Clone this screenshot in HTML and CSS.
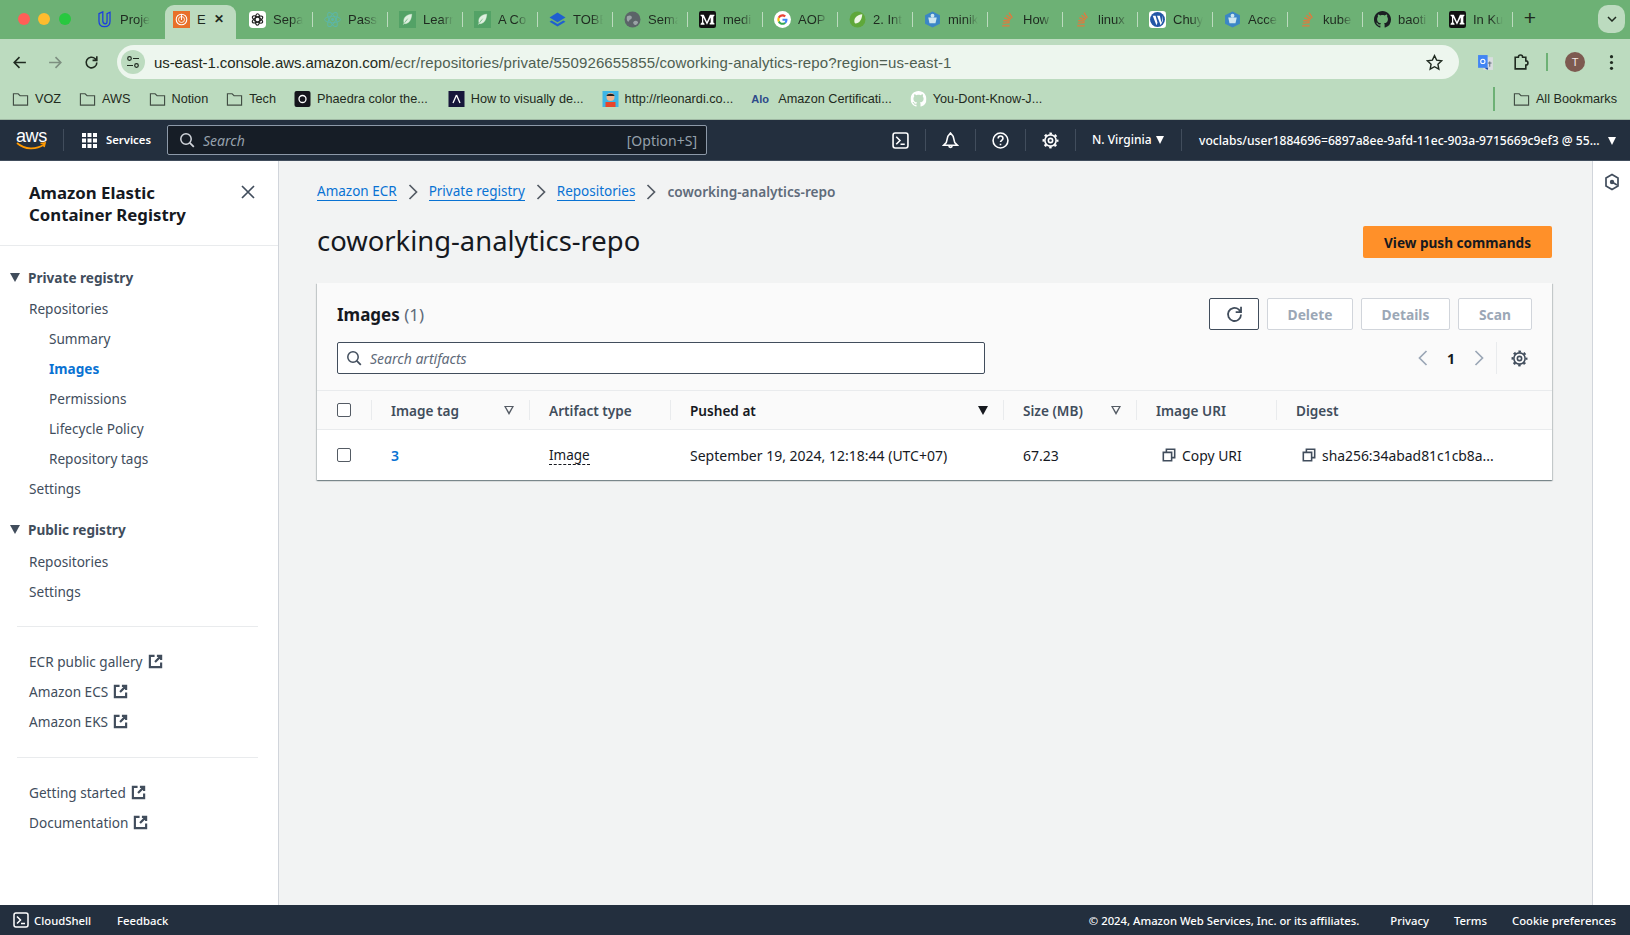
FILE: index.html
```html
<!DOCTYPE html>
<html>
<head>
	<title>coworking-analytics-repo</title>
	<link rel="stylesheet" href="styles.css">
</head>
<body>
	<svg class="defs">
		<symbol id="i-udacity" viewBox="0 0 16 20"><path d="M1.5 3 6 1v10.500c0 2 1 3.500 3 3.500s2-1.500 2-3V3l3.500-1.500V12c0 4-2.500 6.500-6.500 6.500S1.500 16 1.500 12z" fill="none" stroke="#1c3fe0" stroke-width="1.500"/></symbol>
		<symbol id="i-aws-tab" viewBox="0 0 16 16"><rect width="16" height="16" fill="#e8702a"/><circle cx="8" cy="8" r="5" fill="none" stroke="#fff" stroke-width="1"/><circle cx="8" cy="8" r="2.800" fill="none" stroke="#fff" stroke-width=".8"/><path d="M8 3v5.500" stroke="#fff" stroke-width=".9"/></symbol>
		<symbol id="i-openai" viewBox="0 0 16 16"><rect width="16" height="16" rx="3.500" fill="#fff"/><g fill="none" stroke="#222" stroke-width="1.100"><ellipse cx="8" cy="8" rx="2.200" ry="5.400"/><ellipse cx="8" cy="8" rx="2.200" ry="5.400" transform="rotate(60 8 8)"/><ellipse cx="8" cy="8" rx="2.200" ry="5.400" transform="rotate(120 8 8)"/></g></symbol>
		<symbol id="i-react" viewBox="0 0 16 16"><g fill="none" stroke="#5cb6a8" stroke-width=".9"><ellipse cx="8" cy="8" rx="7.500" ry="3"/><ellipse cx="8" cy="8" rx="7.500" ry="3" transform="rotate(60 8 8)"/><ellipse cx="8" cy="8" rx="7.500" ry="3" transform="rotate(120 8 8)"/></g><circle cx="8" cy="8" r="1.400" fill="#5cb6a8"/></symbol>
		<symbol id="i-leaf" viewBox="0 0 16 16"><rect width="16" height="16" fill="#53a266"/><path d="M12 3C7 3.500 4.500 6 4.500 9.500c0 1.200.4 2 1 2.500C10 11.500 11.500 8 12 3zM4 13c1-3 3-5 5-6.500" fill="#dff0e0" stroke="#dff0e0" stroke-width=".4"/></symbol>
		<symbol id="i-tobe" viewBox="0 0 16 16"><path d="M8 1.500 15.500 6 8 10.500.5 6z" fill="#1f5fd0"/><path d="M2.500 9 8 12.300 13.500 9l2 1.200L8 14.500.5 10.200z" fill="#1f5fd0"/></symbol>
		<symbol id="i-globe" viewBox="0 0 16 16"><circle cx="8" cy="8" r="7.500" fill="#5b6468"/><path d="M3 5c2-1 3-1 4 0s0 3-1 3-1 2-2 2-2-3-1-5zm6 5c1-1 3-1 4 0s-2 4-3 3-2-2-1-3z" fill="#9aa3a6"/></symbol>
		<symbol id="i-medium" viewBox="0 0 16 16"><rect width="16" height="16" rx="2" fill="#111"/><path d="M1.500 3.500h3l3 6.500 2.800-6.500h4.200v1l-1 .8v5.500l1 .8v1h-4.500v-1l1-.8V6L7.500 13 4 6v4.500l1.200 1.500v1H1.500v-1l1.300-1.500V5.300l-1.300-.8z" fill="#fff"/></symbol>
		<symbol id="i-google" viewBox="0 0 16 16"><circle cx="8" cy="8" r="8" fill="#fff"/><path d="M12.700 8.200c0-.4 0-.7-.1-1H8v1.900h2.600c-.1.600-.5 1.200-1 1.500l1.600 1.200c1-.9 1.500-2.200 1.500-3.600z" fill="#4285f4"/><path d="M8 13c1.300 0 2.400-.4 3.200-1.200l-1.600-1.200c-.4.300-1 .5-1.600.5-1.300 0-2.300-.8-2.700-2L3.700 10.300C4.500 11.900 6.100 13 8 13z" fill="#34a853"/><path d="M5.300 9.100c-.2-.7-.2-1.500 0-2.200L3.700 5.700c-.7 1.400-.7 3.100 0 4.600z" fill="#fbbc05"/><path d="M8 5.100c.7 0 1.300.2 1.800.7l1.400-1.400C10.400 3.500 9.200 3 8 3 6.100 3 4.500 4.100 3.700 5.700l1.600 1.200c.4-1 1.400-1.800 2.700-1.800z" fill="#ea4335"/></symbol>
		<symbol id="i-spring" viewBox="0 0 16 16"><circle cx="8" cy="8" r="7.500" fill="#5fa83a"/><path d="M12.500 3C8 3.500 5 6 5 9.500c0 1 .3 1.800.8 2.300C10 11.500 12 8 12.500 3z" fill="#eef6e6"/></symbol>
		<symbol id="i-mini" viewBox="0 0 16 16"><path d="M8 .5 15 4v8l-7 3.500L1 12V4z" fill="#3b86c6"/><path d="M4 6h8l-1.200 5.500H5.200z" fill="#cfe6ef"/><circle cx="8" cy="4.500" r="1.800" fill="#cfe6ef"/></symbol>
		<symbol id="i-flame" viewBox="0 0 16 16"><g fill="none" stroke="#e8763a" stroke-width="1.100"><path d="M3 14h7"/><path d="M3.500 11.500 10 11"/><path d="M4 9l6 .6"/><path d="M5 6.500l5.500 2"/><path d="M7 4l4.500 3.500"/><path d="M9.500 1.500l3 5"/></g></symbol>
		<symbol id="i-w" viewBox="0 0 16 16"><rect width="16" height="16" rx="3" fill="#fff"/><circle cx="8" cy="8" r="7" fill="#2257a6"/><path d="M3.500 4.500h2.700L8 11l-1 2.300zM7.500 4.500h2.700l1.500 6.500 1-3.500c.3-1.300-.3-2-.7-3 1.500 1.500 1.500 3.500.7 5.500l-1.700 3.500z" fill="#fff"/></symbol>
		<symbol id="i-github" viewBox="0 0 16 16"><path d="M8 0C3.580 0 0 3.580 0 8c0 3.540 2.290 6.530 5.470 7.590.4.070.55-.17.55-.38 0-.19-.01-.82-.01-1.490-2.010.37-2.530-.49-2.690-.94-.09-.23-.48-.94-.82-1.130-.28-.15-.68-.52-.01-.53.63-.01 1.080.58 1.230.82.720 1.210 1.870.87 2.330.66.070-.52.280-.87.510-1.070-1.780-.2-3.640-.89-3.640-3.950 0-.87.310-1.590.820-2.150-.08-.2-.36-1.020.080-2.120 0 0 .670-.21 2.200.820.640-.18 1.320-.27 2-.27.680 0 1.360.090 2 .27 1.530-1.040 2.200-.82 2.200-.82.440 1.100.160 1.920.080 2.120.510.560.820 1.270.820 2.150 0 3.070-1.870 3.750-3.650 3.950.290.250.540.730.540 1.480 0 1.070-.01 1.930-.01 2.200 0 .21.150.46.550.38A8.013 8.013 0 0016 8c0-4.420-3.580-8-8-8z" fill="currentColor"/></symbol>
		<symbol id="i-folder" viewBox="0 0 18 16"><path d="M1.500 2.500h5l2 2h8v10h-15z" fill="none" stroke="currentColor" stroke-width="1.200"/></symbol>
		<symbol id="i-external" viewBox="0 0 16 16"><path d="M7 2H2v12h12V9M9.500 2H14v4.500M14 2 7.500 8.500" fill="none" stroke="currentColor" stroke-width="2.300"/></symbol>
		<symbol id="i-gear" viewBox="0 0 16 16"><circle cx="8" cy="8" r="5.300" fill="none" stroke="currentColor" stroke-width="1.500"/><circle cx="8" cy="8" r="6.600" fill="none" stroke="currentColor" stroke-width="1.800" stroke-dasharray="2.400 2.780" stroke-dashoffset="1.200"/><circle cx="8" cy="8" r="2" fill="none" stroke="currentColor" stroke-width="1.500"/></symbol>
		<symbol id="i-shell" viewBox="0 0 16 16"><rect x="1" y="1" width="14" height="14" rx="2" fill="none" stroke="currentColor" stroke-width="1.500"/><path d="M4 4.500 7.500 8 4 11.500M8 11.500h4" fill="none" stroke="currentColor" stroke-width="1.500"/></symbol>
		<symbol id="i-search" viewBox="0 0 16 16"><circle cx="7" cy="7" r="5.200" fill="none" stroke="currentColor" stroke-width="1.500"/><path d="m10.800 10.800 4 4" stroke="currentColor" stroke-width="1.800"/></symbol>
		<symbol id="i-copy" viewBox="0 0 16 16"><path d="M1.500 5h9.500v9.500H1.500zM5 5V1.500h9.500V11H11" fill="none" stroke="currentColor" stroke-width="1.800"/></symbol>
		<symbol id="i-chev" viewBox="0 0 10 16"><path d="m1.500 1 7 7-7 7" fill="none" stroke="currentColor" stroke-width="1.700"/></symbol>
	</svg>

	<div class="tabstrip">
		<div class="lights"><span class="light red"></span><span class="light yellow"></span><span class="light green"></span></div>
		<div class="tab firsttab"><svg class="favicon"><use href="#i-udacity"/></svg><span class="tabtitle">Proje</span></div>
		<div class="tab active"><svg class="favicon"><use href="#i-aws-tab"/></svg><span class="tabtitle short">E</span><span class="tabclose">✕</span></div>
		<div class="tab"><svg class="favicon"><use href="#i-openai"/></svg><span class="tabtitle">Sepa</span></div>
		<div class="tab"><svg class="favicon"><use href="#i-react"/></svg><span class="tabtitle">Passi</span></div>
		<div class="tab"><svg class="favicon"><use href="#i-leaf"/></svg><span class="tabtitle">Learr</span></div>
		<div class="tab"><svg class="favicon"><use href="#i-leaf"/></svg><span class="tabtitle">A Co</span></div>
		<div class="tab"><svg class="favicon"><use href="#i-tobe"/></svg><span class="tabtitle">TOBE</span></div>
		<div class="tab"><svg class="favicon"><use href="#i-globe"/></svg><span class="tabtitle">Sema</span></div>
		<div class="tab"><svg class="favicon"><use href="#i-medium"/></svg><span class="tabtitle">medi</span></div>
		<div class="tab"><svg class="favicon"><use href="#i-google"/></svg><span class="tabtitle">AOP</span></div>
		<div class="tab"><svg class="favicon"><use href="#i-spring"/></svg><span class="tabtitle">2. Int</span></div>
		<div class="tab"><svg class="favicon"><use href="#i-mini"/></svg><span class="tabtitle">minik</span></div>
		<div class="tab"><svg class="favicon"><use href="#i-flame"/></svg><span class="tabtitle">How</span></div>
		<div class="tab"><svg class="favicon"><use href="#i-flame"/></svg><span class="tabtitle">linux</span></div>
		<div class="tab"><svg class="favicon"><use href="#i-w"/></svg><span class="tabtitle">Chuy</span></div>
		<div class="tab"><svg class="favicon"><use href="#i-mini"/></svg><span class="tabtitle">Acce</span></div>
		<div class="tab"><svg class="favicon"><use href="#i-flame"/></svg><span class="tabtitle">kube</span></div>
		<div class="tab"><svg class="favicon github"><use href="#i-github"/></svg><span class="tabtitle">baoti</span></div>
		<div class="tab"><svg class="favicon"><use href="#i-medium"/></svg><span class="tabtitle">In Ku</span></div>
		<div class="newtab">+</div>
		<div class="tabmenu"><svg width="10" height="6" viewBox="0 0 10 6"><path d="m1 1 4 4 4-4" fill="none" stroke="#1f2a20" stroke-width="1.500"/></svg></div>
	</div>

	<div class="toolbar">
		<svg class="tool" viewBox="0 0 16 16"><path d="M14 8H3M8 3 3 8l5 5" fill="none" stroke="#1f2a20" stroke-width="1.500"/></svg>
		<svg class="tool" viewBox="0 0 16 16"><path d="M2 8h11M8 3l5 5-5 5" fill="none" stroke="#7d8f80" stroke-width="1.500"/></svg>
		<svg class="tool" viewBox="0 0 16 16"><path d="M13 8a5 5 0 1 1-1.500-3.500L13 6M13 2v4H9" fill="none" stroke="#1f2a20" stroke-width="1.500"/></svg>
		<div class="omnibox">
			<span class="sitechip"><svg width="14" height="14" viewBox="0 0 14 14"><g fill="none" stroke="#1f2a20" stroke-width="1.200"><circle cx="3.500" cy="3.500" r="1.800"/><path d="M7 3.500h6M1 10.500h6"/><circle cx="10.500" cy="10.500" r="1.800"/></g></svg></span>
			<span class="url"><span class="host">us-east-1.console.aws.amazon.com</span>/ecr/repositories/private/550926655855/coworking-analytics-repo?region=us-east-1</span>
			<svg class="star" viewBox="0 0 16 16"><path d="m8 1.500 2 4.300 4.700.6-3.500 3.200.9 4.700L8 12l-4.100 2.300.9-4.700L1.300 6.400 6 5.800z" fill="none" stroke="#1f2a20" stroke-width="1.300"/></svg>
		</div>
		<svg class="tool translate" viewBox="0 0 16 16"><rect x="6" y="3" width="9" height="12" fill="#d9dde0"/><rect x="1" y="1" width="9" height="12" fill="#4285f4"/><path d="M7 13h3.500L10 15z" fill="#1d4fa8"/><circle cx="5.500" cy="7" r="2" fill="none" stroke="#fff" stroke-width="1"/><path d="M12 7v5M10.300 8.500h3.400" stroke="#5f6b7a" stroke-width=".9"/></svg>
		<svg class="tool puzzle" viewBox="0 0 16 16"><path d="M3 3h3a2 2 0 0 1 4 0h3v3.500a2 2 0 0 1 0 4V14H3z" fill="none" stroke="#1f2a20" stroke-width="1.500"/></svg>
		<span class="toolsep"></span>
		<span class="avatar">T</span>
		<svg class="tool dots" viewBox="0 0 16 16"><circle cx="8" cy="2.500" r="1.500"/><circle cx="8" cy="8" r="1.500"/><circle cx="8" cy="13.500" r="1.500"/></svg>
	</div>

	<div class="bookmarks">
		<a class="bm"><svg class="bmicon"><use href="#i-folder"/></svg>VOZ</a>
		<a class="bm"><svg class="bmicon"><use href="#i-folder"/></svg>AWS</a>
		<a class="bm"><svg class="bmicon"><use href="#i-folder"/></svg>Notion</a>
		<a class="bm"><svg class="bmicon"><use href="#i-folder"/></svg>Tech</a>
		<a class="bm"><svg class="bmicon" viewBox="0 0 16 16"><rect width="16" height="16" rx="2" fill="#15151c"/><circle cx="8" cy="8" r="3.500" fill="none" stroke="#fff" stroke-width="1.300"/></svg>Phaedra color the...</a>
		<a class="bm nudge"><svg class="bmicon" viewBox="0 0 16 16"><rect width="16" height="16" fill="#16163a"/><path d="M8 4 4.500 12M8 4l3.500 8" stroke="#fff" stroke-width="1.300"/></svg>How to visually de...</a>
		<a class="bm"><svg class="bmicon" viewBox="0 0 16 16"><rect width="16" height="16" fill="#3db5e6"/><circle cx="8" cy="6" r="4" fill="#f2b48c"/><path d="M4 5c0-3 8-3 8 0z" fill="#222"/><rect x="3" y="11" width="10" height="5" fill="#e8452c"/></svg>http://rleonardi.co...</a>
		<a class="bm"><span class="alo">Alo</span>Amazon Certificati...</a>
		<a class="bm"><svg class="bmicon ghwhite" viewBox="0 0 16 16"><use href="#i-github"/></svg>You-Dont-Know-J...</a>
		<span class="bmsep"></span>
		<a class="bm"><svg class="bmicon"><use href="#i-folder"/></svg>All Bookmarks</a>
	</div>

	<div class="topnav">
		<div class="awslogo"><span class="awstext">aws</span><svg width="31" height="8" viewBox="0 0 31 8"><path d="M1 1c8 7 19 7 27 1.500M24.500 1.500l4.500-.5-1 4" fill="none" stroke="#ff9900" stroke-width="1.700"/></svg></div>
		<span class="navsep first"></span>
		<svg class="gridicon" viewBox="0 0 15 15"><g fill="#fff"><rect width="4" height="4"/><rect x="5.500" width="4" height="4"/><rect x="11" width="4" height="4"/><rect y="5.500" width="4" height="4"/><rect x="5.500" y="5.500" width="4" height="4"/><rect x="11" y="5.500" width="4" height="4"/><rect y="11" width="4" height="4"/><rect x="5.500" y="11" width="4" height="4"/><rect x="11" y="11" width="4" height="4"/></g></svg>
		<span class="services">Services</span>
		<div class="navsearch">
			<svg class="navsearchicon"><use href="#i-search"/></svg>
			<span class="navsearchtext">Search</span>
			<span class="navshortcut">[Option+S]</span>
		</div>
		<div class="navicon shell"><svg><use href="#i-shell"/></svg></div>
		<div class="navicon"><svg viewBox="0 0 16 16"><path d="M8 1 5.500 4 4 10l-2.500 2.500h13L12 10l-1.500-6zM6.500 13c0 2 3 2 3 0" fill="none" stroke="currentColor" stroke-width="1.500"/></svg></div>
		<div class="navicon"><svg viewBox="0 0 16 16"><circle cx="8" cy="8" r="7" fill="none" stroke="currentColor" stroke-width="1.500"/><path d="M5.800 6c0-3 4.500-3 4.500 0 0 1.800-2.300 1.800-2.300 3.500M8 11v1.500" fill="none" stroke="currentColor" stroke-width="1.500"/></svg></div>
		<div class="navicon"><svg><use href="#i-gear"/></svg></div>
		<div class="region">N. Virginia <i class="caret"></i></div>
		<div class="account">voclabs/user1884696=6897a8ee-9afd-11ec-903a-9715669c9ef3 @ 55... <i class="caret"></i></div>
	</div>

	<div class="content">
		<div class="sidebar">
			<div class="sidehead">
				<h2>Amazon Elastic Container Registry</h2>
				<svg class="sideclose" viewBox="0 0 14 14"><path d="m1 1 12 12M13 1 1 13" stroke="#414d5c" stroke-width="1.700"/></svg>
			</div>
			<div class="sidesection">
				<div class="sidegroup"><i class="groupcaret"></i>Private registry</div>
				<a class="sideitem">Repositories</a>
				<a class="sideitem sub">Summary</a>
				<a class="sideitem sub current">Images</a>
				<a class="sideitem sub">Permissions</a>
				<a class="sideitem sub">Lifecycle Policy</a>
				<a class="sideitem sub">Repository tags</a>
				<a class="sideitem">Settings</a>
				<div class="sidegroup second"><i class="groupcaret"></i>Public registry</div>
				<a class="sideitem">Repositories</a>
				<a class="sideitem">Settings</a>
			</div>
			<hr class="sidediv">
			<a class="sideitem">ECR public gallery <svg class="ext"><use href="#i-external"/></svg></a>
			<a class="sideitem">Amazon ECS <svg class="ext"><use href="#i-external"/></svg></a>
			<a class="sideitem">Amazon EKS <svg class="ext"><use href="#i-external"/></svg></a>
			<hr class="sidediv lower">
			<a class="sideitem">Getting started <svg class="ext"><use href="#i-external"/></svg></a>
			<a class="sideitem">Documentation <svg class="ext"><use href="#i-external"/></svg></a>
		</div>

		<div class="main">
			<div class="crumbs">
				<a class="crumb">Amazon ECR</a><svg class="crumbsep"><use href="#i-chev"/></svg>
				<a class="crumb">Private registry</a><svg class="crumbsep"><use href="#i-chev"/></svg>
				<a class="crumb">Repositories</a><svg class="crumbsep"><use href="#i-chev"/></svg>
				<span class="crumbnow">coworking-analytics-repo</span>
			</div>
			<div class="pagehead">
				<h1>coworking-analytics-repo</h1>
				<button class="primary">View push commands</button>
			</div>
			<div class="card">
				<div class="cardtop">
					<h3>Images <span class="count">(1)</span></h3>
					<div class="actions">
						<button class="btn refresh"><svg width="19" height="19" viewBox="0 0 16 16"><path d="M13.500 8a5.500 5.500 0 1 1-2-4.300L13.500 6M13.500 1.500V6H9" fill="none" stroke="#414d5c" stroke-width="1.500"/></svg></button>
						<button class="btn off delete">Delete</button>
						<button class="btn off details">Details</button>
						<button class="btn off scan">Scan</button>
					</div>
				</div>
				<div class="cardfilter">
					<div class="filter">
						<svg class="filtericon"><use href="#i-search"/></svg>
						<span>Search artifacts</span>
					</div>
					<div class="pager">
						<svg class="pagechev prev"><use href="#i-chev"/></svg>
						<span class="pagenum">1</span>
						<svg class="pagechev"><use href="#i-chev"/></svg>
						<span class="pagesep"></span>
						<svg class="pagegear"><use href="#i-gear"/></svg>
					</div>
				</div>
				<div class="tablerow thead">
					<div class="cell check"><span class="checkbox"></span></div>
					<div class="cell sortable"><span>Image tag</span><i class="sort"></i></div>
					<div class="cell"><span>Artifact type</span></div>
					<div class="cell sortable sorted"><span>Pushed at</span><i class="sort down"></i></div>
					<div class="cell sortable"><span>Size (MB)</span><i class="sort"></i></div>
					<div class="cell"><span>Image URI</span></div>
					<div class="cell"><span>Digest</span></div>
				</div>
				<div class="tablerow tbody">
					<div class="cell check"><span class="checkbox"></span></div>
					<div class="cell"><a class="taglink">3</a></div>
					<div class="cell"><span class="dashed">Image</span></div>
					<div class="cell">September 19, 2024, 12:18:44 (UTC+07)</div>
					<div class="cell">67.23</div>
					<div class="cell copycell"><svg class="copy"><use href="#i-copy"/></svg>Copy URI</div>
					<div class="cell copycell"><svg class="copy"><use href="#i-copy"/></svg>sha256:34abad81c1cb8a...</div>
				</div>
			</div>
		</div>

		<div class="rail">
			<svg width="16" height="18" viewBox="0 0 16 18"><path d="M8 1.500 14 5v8l-6 3.500L2 13V5z" fill="none" stroke="#414d5c" stroke-width="1.700"/><circle cx="8" cy="9" r="2.200" fill="#414d5c"/><path d="M8 9l5 3" stroke="#414d5c" stroke-width="1.700"/></svg>
		</div>
	</div>

	<div class="footer">
		<svg class="footshell"><use href="#i-shell"/></svg>
		<span class="footlink cloudshell">CloudShell</span>
		<span class="footlink feedback">Feedback</span>
		<span class="copyright">© 2024, Amazon Web Services, Inc. or its affiliates.</span>
		<span class="footlink privacy">Privacy</span>
		<span class="footlink terms">Terms</span>
		<span class="footlink">Cookie preferences</span>
	</div>
</body>
</html>
```

FILE: styles.css
```css
*{
	box-sizing: border-box;
	margin: 0px;
	padding: 0px;
}
body{
	width: 1630px;
	height: 935px;
	overflow: hidden;
	display: flex;
	flex-direction: column;
	font-family: "Noto Sans", sans-serif;
	font-size: 14px;
	color: #16191f;
	background-color: #f2f3f3;
}
.defs{
	display: none;
}

/* browser chrome */
.tabstrip{
	height: 39px;
	flex: none;
	display: flex;
	background-color: #6db175;
	font-family: "Liberation Sans", sans-serif;
	font-size: 13px;
	color: #1f2a20;
}
.lights{
	width: 88px;
	flex: none;
	display: flex;
	gap: 8.300px;
	padding: 13px 0 0 18px;
}
.light{
	width: 12px;
	height: 12px;
	border-radius: 50%;
}
.red{ background-color: #ff5f57; }
.yellow{ background-color: #febc2e; }
.green{ background-color: #28c840; }
.tab{
	position: relative;
	width: 75px;
	height: 34px;
	margin-top: 5px;
	flex: none;
	display: flex;
	align-items: center;
	gap: 7px;
	padding: 0 0 6px 11px;
}
.tab::after{
	content: "";
	position: absolute;
	right: 0;
	top: 7px;
	width: 1.500px;
	height: 15px;
	background-color: #bcdbbf;
}
.tab.firsttab{
	padding-left: 8px;
}
.firsttab::after{
	display: none;
}
.tab.active{
	width: 71px;
	margin-left: 2px;
	margin-right: 2px;
	padding-left: 8px;
	background-color: #bcdbbf;
	border-radius: 9px 9px 0 0;
}
.tab.active::after{
	display: none;
}
.favicon{
	width: 17px;
	height: 17px;
	flex: none;
}
.github{
	color: #1b1f23;
}
.tabtitle{
	white-space: nowrap;
	-webkit-mask-image: linear-gradient(to right, #000 18px, transparent 30px);
	mask-image: linear-gradient(to right, #000 18px, transparent 30px);
}
.tabtitle.short{
	-webkit-mask-image: none;
	mask-image: none;
}
.tabclose{
	margin-left: 1px;
	font-size: 12px;
	font-weight: bold;
}
.newtab{
	width: 34px;
	text-align: center;
	font-size: 21px;
	line-height: 36px;
}
.tabmenu{
	width: 27px;
	height: 28px;
	margin: 5px 0 0 51px;
	display: flex;
	align-items: center;
	justify-content: center;
	border-radius: 10px;
	background-color: #bcdbbf;
}
.toolbar{
	height: 46px;
	flex: none;
	display: flex;
	align-items: center;
	padding: 0 0 0 11px;
	background-color: #bcdbbf;
}
.tool{
	width: 17px;
	height: 17px;
	flex: none;
	margin-right: 19px;
}
.omnibox{
	width: 1342px;
	height: 34px;
	margin: 0 0 0 -2px;
	flex: none;
	display: flex;
	align-items: center;
	padding: 0 16px 0 4px;
	border-radius: 17px;
	background-color: #edf6ee;
	font-family: "Liberation Sans", sans-serif;
	font-size: 15px;
	letter-spacing: .12px;
	color: #4f6052;
}
.sitechip{
	width: 24px;
	height: 24px;
	display: flex;
	align-items: center;
	justify-content: center;
	border-radius: 50%;
	background-color: #bcdbbf;
}
.url{
	flex: 1;
	margin-left: 9px;
	white-space: nowrap;
}
.host{
	color: #1f2a20;
	letter-spacing: -.09px;
}
.star{
	width: 17px;
	height: 17px;
}
.translate{
	margin: 0 18px 0 18px;
}
.puzzle{
	margin-right: 0;
}
.toolsep{
	width: 2px;
	height: 18px;
	margin: 0 17px 0 17px;
	background-color: #6db175;
}
.avatar{
	width: 20px;
	height: 20px;
	flex: none;
	border-radius: 50%;
	background-color: #7d5a50;
	color: #f3e9e4;
	font-family: "Liberation Sans", sans-serif;
	font-size: 11px;
	line-height: 20px;
	text-align: center;
}
.dots{
	margin: 0 0 0 18px;
	fill: #1f2a20;
}
.bookmarks{
	height: 35px;
	flex: none;
	display: flex;
	align-items: center;
	gap: 18px;
	padding: 0 13px 6px 12px;
	background-color: #bcdbbf;
	border-bottom: 1px solid #9fb8a3;
	font-family: "Liberation Sans", sans-serif;
	font-size: 12.700px;
	color: #1f2a20;
}
.bm{
	display: flex;
	align-items: center;
	gap: 6px;
	white-space: nowrap;
}
.bm.nudge{
	margin-left: 2px;
}
.bmicon{
	width: 17px;
	height: 16px;
	color: #414d44;
	flex: none;
}
.ghwhite{
	color: #fff;
}
.alo{
	width: 21px;
	color: #2d4a8a;
	font-size: 11px;
	font-weight: bold;
}
.bmsep{
	width: 2px;
	height: 24px;
	margin-left: auto;
	background-color: #6db175;
}

/* console nav */
.topnav{
	height: 41px;
	flex: none;
	display: flex;
	align-items: center;
	background-color: #232f3e;
	color: #fff;
	font-size: 12px;
	border-bottom: 1px solid #414d5c;
}
.awslogo{
	width: 63px;
	padding-left: 16px;
	display: flex;
	flex-direction: column;
	align-items: flex-start;
	line-height: 13px;
}
.awstext{
	font-family: "Liberation Sans", sans-serif;
	font-size: 18px;
	letter-spacing: -0.400px;
}
.awslogo svg{
	margin-top: -1px;
}
.navsep{
	width: 1px;
	height: 22px;
	background-color: #414d5c;
}
.gridicon{
	width: 15px;
	height: 15px;
	margin-left: 18px;
}
.services{
	width: 61px;
	margin-left: 9px;
	padding-bottom: 2px;
	font-size: 11.300px;
	font-weight: 600;
}
.navsearch{
	width: 540px;
	height: 30px;
	display: flex;
	align-items: center;
	padding: 0 9px 0 11px;
	border: 1px solid #8d99a8;
	border-radius: 2px;
	background-color: #161d26;
	font-size: 14px;
}
.navsearchicon{
	width: 16px;
	height: 16px;
	color: #d1d5db;
}
.navsearchtext{
	flex: 1;
	margin-left: 8px;
	font-style: italic;
	color: #95a0ab;
}
.navshortcut{
	color: #95a0ab;
}
.navicon{
	width: 50px;
	height: 22px;
	display: flex;
	align-items: center;
	justify-content: center;
	border-right: 1px solid #414d5c;
}
.navicon svg{
	width: 17px;
	height: 17px;
}
.navicon.shell{
	margin-left: 169px;
	width: 50px;
}
.region{
	width: 106px;
	height: 22px;
	padding-left: 16px;
	line-height: 22px;
	font-weight: 500;
	border-right: 1px solid #414d5c;
	white-space: nowrap;
}
.region .caret{
	margin-left: 1px;
}
.account{
	flex: 1;
	padding-left: 17px;
	white-space: nowrap;
	font-size: 12.120px;
	font-weight: 500;
}
.caret{
	display: inline-block;
	width: 0;
	height: 0;
	margin-left: 5px;
	border-left: 4.500px solid transparent;
	border-right: 4.500px solid transparent;
	border-top: 8px solid #fff;
}

/* sidebar */
.content{
	flex: 1;
	display: flex;
	min-height: 0;
}
.sidebar{
	width: 279px;
	flex: none;
	background-color: #fff;
	border-right: 1.500px solid #d1d5db;
	color: #414d5c;
	font-size: 13.600px;
}
.sidehead{
	height: 85px;
	display: flex;
	justify-content: space-between;
	padding: 21px 23px 0 29px;
	border-bottom: 1px solid #e9ebed;
}
.sidehead h2{
	width: 190px;
	font-size: 16.800px;
	line-height: 22px;
	font-weight: 700;
	color: #16191f;
}
.sideclose{
	width: 14px;
	height: 14px;
	margin: 3px 0 0 0;
}
.sidesection{
	padding-top: 17px;
}
.sidegroup{
	height: 30px;
	display: flex;
	align-items: center;
	padding: 0 0 2px 10px;
	font-weight: 700;
}
.sidegroup.second{
	height: 31px;
	margin-top: 12px;
	padding-bottom: 2px;
}
.groupcaret{
	width: 0;
	height: 0;
	margin-right: 8px;
	border-left: 5.500px solid transparent;
	border-right: 5.500px solid transparent;
	border-top: 9px solid #414d5c;
}
.sideitem{
	height: 30px;
	display: flex;
	align-items: center;
	gap: 5px;
	padding-left: 29px;
}
.sideitem.sub{
	padding-left: 49px;
}
.sideitem.current{
	color: #0972d3;
	font-weight: 700;
}
.sidediv{
	margin: 20px 20px 19px 17px;
	border: none;
	border-top: 1px solid #e9ebed;
}
.sidediv.lower{
	margin-top: 21px;
}
.ext{
	width: 15px;
	height: 15px;
}

/* main column */
.main{
	flex: 1;
	padding: 17px 40px 0 38px;
}
.crumbs{
	height: 27px;
	display: flex;
	align-items: center;
	font-size: 13.500px;
}
.crumb{
	color: #0972d3;
	border-bottom: 1px solid #0972d3;
	line-height: 18px;
}
.crumbsep{
	width: 10px;
	height: 16px;
	margin: 0 11px;
	color: #545b64;
}
.crumbnow{
	font-size: 13.650px;
	font-weight: 600;
	color: #5f6b7a;
}
.pagehead{
	height: 32px;
	margin-top: 21px;
	display: flex;
	justify-content: space-between;
	align-items: center;
}
.pagehead h1{
	font-size: 27.400px;
	font-weight: 400;
	line-height: 36px;
	padding-bottom: 3px;
}
.primary{
	width: 189px;
	height: 32px;
	border: none;
	border-radius: 2px;
	background-color: #ff9029;
	color: #16191f;
	font-family: inherit;
	font-size: 13.600px;
	font-weight: 700;
}
.card{
	margin-top: 25px;
	background-color: #fafafa;
	box-shadow: 0 1px 1px rgba(0, 28, 36, .3), 1px 1px 1px rgba(0, 28, 36, .15), -1px 1px 1px rgba(0, 28, 36, .15);
}
.cardtop{
	height: 59px;
	display: flex;
	justify-content: space-between;
	align-items: center;
	padding: 3px 20px 0;
}
.cardtop h3{
	font-size: 17px;
	font-weight: 700;
}
.count{
	font-weight: 400;
	color: #5f6b7a;
}
.actions{
	display: flex;
	gap: 8px;
}
.btn{
	height: 32px;
	background-color: #fff;
	border: 1px solid #414d5c;
	border-radius: 2px;
	font-family: inherit;
	font-size: 13.800px;
	font-weight: 700;
}
.btn.refresh{
	width: 50px;
	display: flex;
	align-items: center;
	justify-content: center;
}
.btn.off{
	border-color: #d1d5db;
	color: #9ba7b6;
}
.delete{ width: 86px; }
.details{ width: 89px; }
.scan{ width: 74px; }
.cardfilter{
	height: 48px;
	display: flex;
	align-items: flex-start;
	justify-content: space-between;
	padding: 0 20px;
}
.filter{
	width: 648px;
	height: 32px;
	display: flex;
	align-items: center;
	gap: 8px;
	padding-left: 8px;
	background-color: #fff;
	border: 1px solid #414d5c;
	border-radius: 2px;
	font-style: italic;
	color: #5f6b7a;
}
.filtericon{
	width: 16px;
	height: 16px;
	color: #414d5c;
}
.pager{
	height: 32px;
	display: flex;
	align-items: center;
}
.pagechev{
	width: 10px;
	height: 16px;
	color: #9ba7b6;
}
.pagechev.prev{
	transform: scaleX(-1);
}
.pagenum{
	width: 46px;
	text-align: center;
	font-weight: 700;
}
.pagesep{
	width: 1px;
	height: 32px;
	margin: 0 14px 0 12px;
	background-color: #e9ebed;
}
.pagegear{
	width: 17px;
	height: 17px;
	color: #414d5c;
	margin-right: 4px;
}
.tablerow{
	display: grid;
	grid-template-columns: 54px 158px 141px 333px 133px 140px 1fr;
}
.thead{
	height: 40px;
	border-top: 1px solid #e9ebed;
	border-bottom: 1px solid #e9ebed;
	font-size: 13.600px;
	font-weight: 600;
	color: #414d5c;
}
.tbody{
	height: 50px;
	background-color: #fff;
	font-size: 14px;
}
.cell{
	display: flex;
	align-items: center;
	padding-left: 20px;
	white-space: nowrap;
}
.thead .cell{
	position: relative;
}
.thead .cell + .cell::before{
	content: "";
	position: absolute;
	left: 0;
	top: 9px;
	width: 1px;
	height: 20px;
	background-color: #e9ebed;
}
.sortable{
	justify-content: space-between;
	padding-right: 15px;
}
.sorted{
	color: #16191f;
}
.sort{
	width: 0;
	height: 0;
	border-left: 5.500px solid transparent;
	border-right: 5.500px solid transparent;
	border-top: 9px solid #545b64;
}
.sort:not(.down)::after{
	content: "";
	display: block;
	width: 0;
	height: 0;
	margin: -8px 0 0 -3.200px;
	border-left: 3.200px solid transparent;
	border-right: 3.200px solid transparent;
	border-top: 5px solid #fafafa;
}
.sort.down{
	border-top-color: #16191f;
}
.check{
	padding-left: 20px;
}
.checkbox{
	width: 14px;
	height: 14px;
	background-color: #fff;
	border: 1px solid #545b64;
	border-radius: 2px;
}
.taglink{
	color: #0972d3;
	font-weight: 600;
}
.dashed{
	border-bottom: 1px dashed #16191f;
	line-height: 18px;
	font-size: 13.500px;
}
.copycell{
	padding-left: 26px;
	gap: 6px;
	font-size: 13.900px;
}
.copy{
	width: 14px;
	height: 14px;
	color: #414d5c;
}
.rail{
	width: 38px;
	flex: none;
	display: flex;
	justify-content: center;
	padding-top: 12px;
	background-color: #fff;
	border-left: 1.500px solid #d1d5db;
}

/* footer */
.footer{
	height: 30px;
	flex: none;
	display: flex;
	align-items: center;
	padding: 0 14px 0 13px;
	background-color: #232f3e;
	color: #fff;
	font-size: 11.300px;
	font-weight: 500;
}
.footshell{
	width: 16px;
	height: 16px;
}
.cloudshell{
	margin-left: 5px;
}
.feedback{
	margin-left: 26px;
}
.copyright{
	margin-left: auto;
}
.privacy{
	margin-left: 31px;
}
.terms{
	margin-left: 25px;
}
.terms + .footlink{
	margin-left: 25px;
}
```
